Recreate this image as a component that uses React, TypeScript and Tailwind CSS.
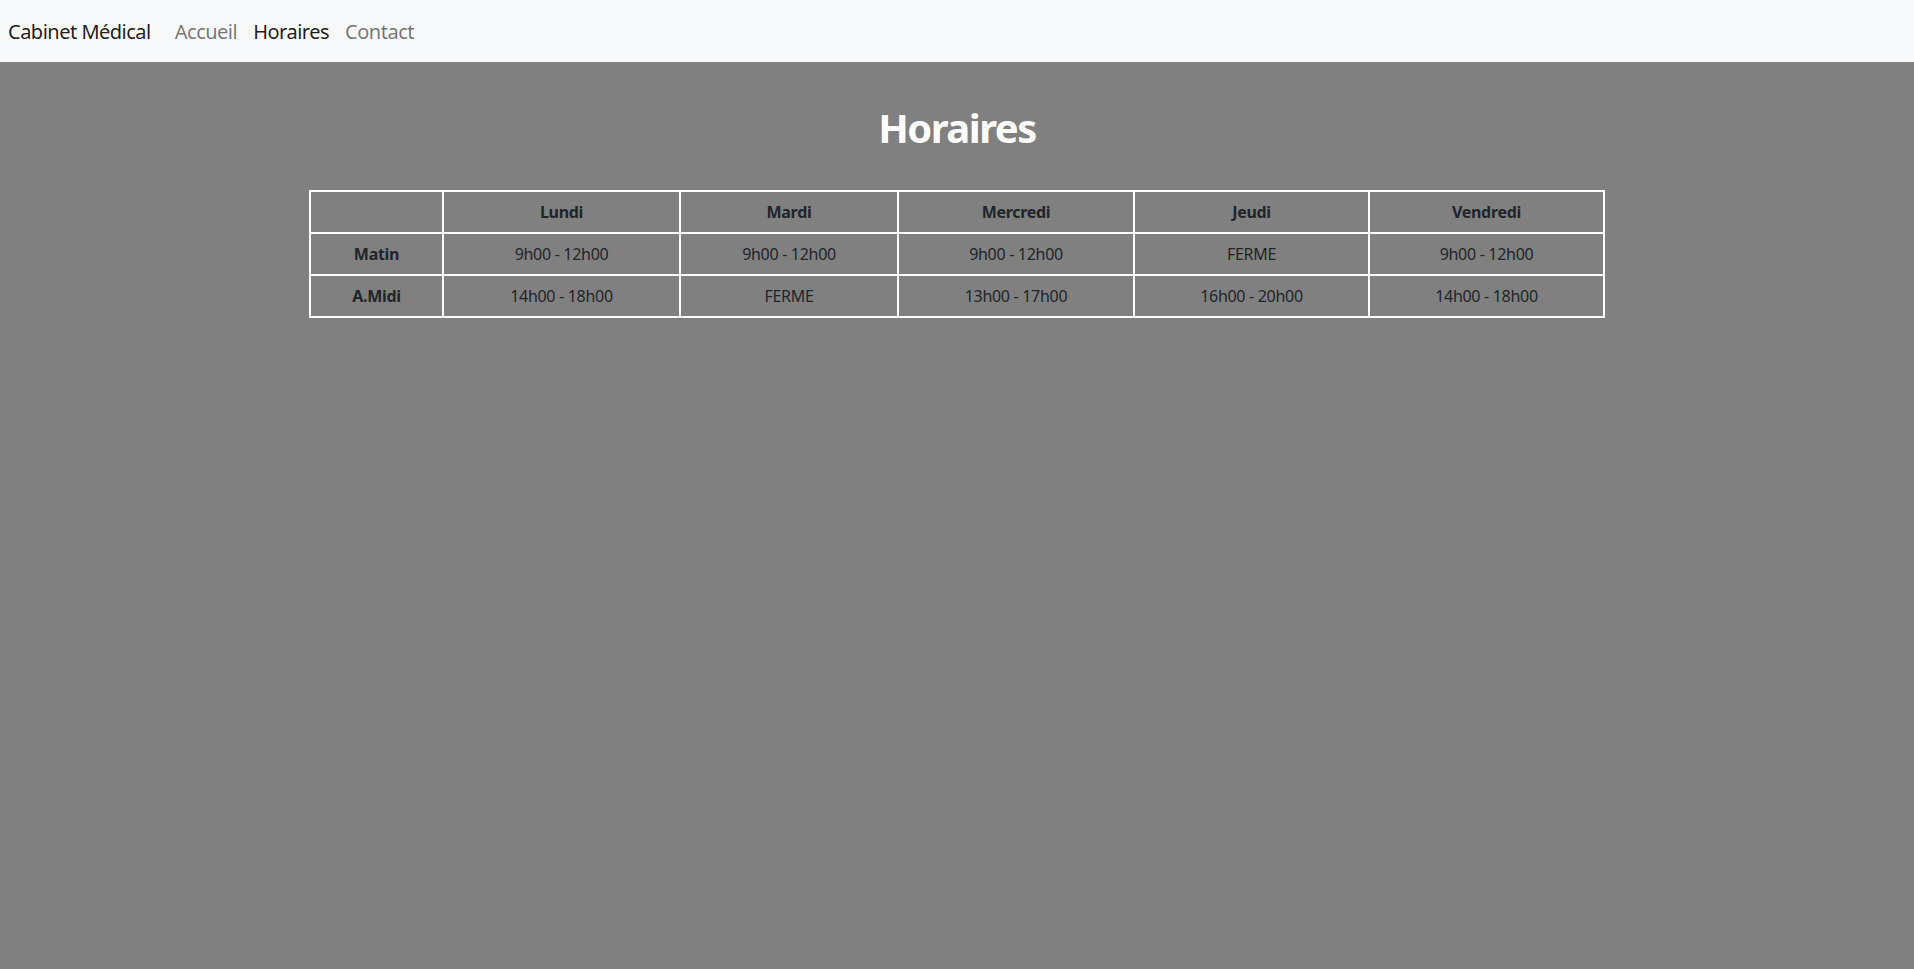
import React from "react";

const days = ["Lundi", "Mardi", "Mercredi", "Jeudi", "Vendredi"];

const rows = [
  { label: "Matin", slots: ["9h00 - 12h00", "9h00 - 12h00", "9h00 - 12h00", "FERME", "9h00 - 12h00"] },
  { label: "A.Midi", slots: ["14h00 - 18h00", "FERME", "13h00 - 17h00", "16h00 - 20h00", "14h00 - 18h00"] },
];

const Navbar = () => {
  return (
    <nav className="bg-[#f8f9fa] px-2 pt-[9px] pb-[7px] flex items-center tracking-[-0.5px]">
      <a href="#" className="text-[20px] leading-[30px] py-2 mr-4 text-black/90">
        Cabinet Médical
      </a>
      <ul className="flex items-center">
        <li>
          <a href="#" className="block px-2 py-2 text-[20px] leading-[30px] text-black/55">
            Accueil
          </a>
        </li>
        <li>
          <a href="#" className="block px-2 py-2 text-[20px] leading-[30px] text-black/90">
            Horaires
          </a>
        </li>
        <li>
          <a href="#" className="block px-2 py-2 text-[20px] leading-[30px] text-black/55">
            Contact
          </a>
        </li>
      </ul>
    </nav>
  );
};

const App = () => {
  return (
    <div
      className="min-h-screen bg-[#808080] text-[#212529]"
      style={{ fontFamily: '"Noto Sans", "Open Sans", sans-serif' }}
    >
      <Navbar />
      <main className="max-w-[1320px] mx-auto px-3">
        <h1 className="text-center text-white font-bold text-[40px] leading-[48px] tracking-[-1.5px] mt-[42px] mb-[38px]">
          Horaires
        </h1>

        {/* Schedule table */}
        <table className="w-full border-collapse border-2 border-white text-center text-base tracking-[-0.3px]">
          <colgroup>
            <col className="w-[133px]" />
            <col className="w-[237px]" />
            <col className="w-[218px]" />
            <col className="w-[236px]" />
            <col className="w-[235px]" />
            <col className="w-[235px]" />
          </colgroup>
          <thead>
            <tr>
              <th className="border-2 border-white py-2 leading-6"></th>
              {days.map((day) => (
                <th key={day} className="border-2 border-white py-2 leading-6 font-bold">
                  {day}
                </th>
              ))}
            </tr>
          </thead>
          <tbody>
            {rows.map((row) => (
              <tr key={row.label}>
                <th className="border-2 border-white py-2 leading-6 font-bold">{row.label}</th>
                {row.slots.map((slot, i) => (
                  <td key={i} className="border-2 border-white py-2 leading-6">
                    {slot}
                  </td>
                ))}
              </tr>
            ))}
          </tbody>
        </table>
      </main>
    </div>
  );
};

export default App;
